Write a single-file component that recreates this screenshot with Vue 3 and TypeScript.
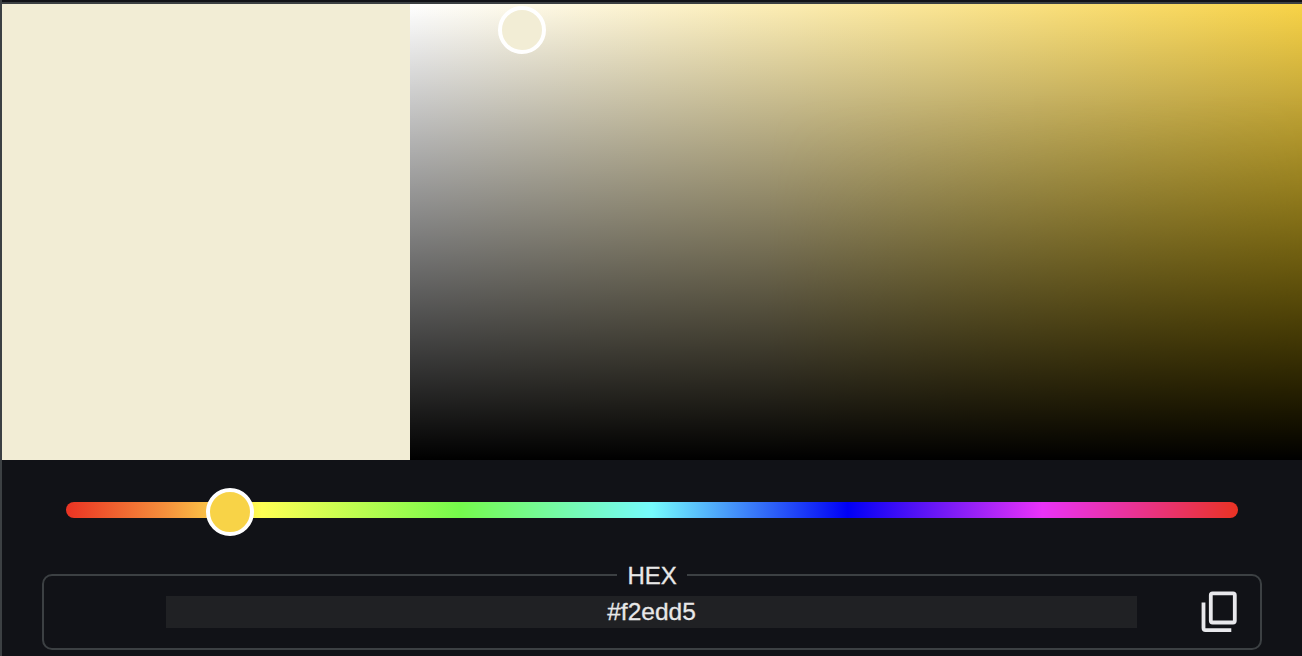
<script setup lang="ts">
import { ref } from 'vue'

const hex = ref<string>('#f2edd5')
</script>

<template>
  <main class="picker">
    <section class="top">
      <div class="preview" :style="{ backgroundColor: hex }"></div>
      <div class="saturation">
        <span class="thumb shade-thumb" :style="{ backgroundColor: hex }"></span>
      </div>
    </section>
    <div class="hue">
      <span class="thumb hue-thumb"></span>
    </div>
    <fieldset class="field">
      <legend>HEX</legend>
      <input v-model="hex" class="value" type="text" spellcheck="false" aria-label="HEX" />
      <button class="copy" type="button" aria-label="Copy">
        <svg width="38" height="44" viewBox="0 0 38 44" fill="none" stroke="#e8e8ec" stroke-width="3.8">
          <rect x="10.8" y="4.3" width="24" height="29.2" rx="1.8" />
          <path d="M3.5 13.5V39.1a2 2 0 0 0 2 2H31.3" />
        </svg>
      </button>
    </fieldset>
  </main>
</template>

<style>
body {
  background: #111217;
}
</style>

<style scoped>
.picker {
  box-sizing: border-box;
  height: 656px;
  overflow: hidden;
  padding-top: 2px;
  border-left: 2px solid #3c4043;
  background: #111217;
  color: #e8e8e8;
  font-family: "Liberation Sans", Arial, sans-serif;
}
.top {
  display: flex;
  height: 456px;
  border-top: 2px solid #3c4043;
}
.preview {
  width: 408px;
}
.saturation {
  position: relative;
  flex: 1;
  background: linear-gradient(to right, #fff, #f8d347);
}
.saturation::before,
.saturation::after {
  content: "";
  position: absolute;
  inset: 0;
}
.saturation::before {
  background: linear-gradient(to right, rgba(248, 208, 0, 0) 40%, #f8d000);
  mask-image: linear-gradient(to bottom, transparent 20%, #000 90%);
}
.saturation::after {
  background: linear-gradient(to top, #000, transparent);
}
.thumb {
  position: absolute;
  z-index: 1;
  box-sizing: border-box;
  width: 48px;
  height: 48px;
  border: 4px solid #fff;
  border-radius: 50%;
}
.shade-thumb {
  left: 88px;
  top: 2px;
}
.hue {
  position: relative;
  height: 16px;
  margin: 42px 64px 0;
  border-radius: 8px;
  background: linear-gradient(to right, #ea3323, #f5903c 8.5%, #ffff54 16.7%, #75fb4c 33.6%, #75fbfd 50%, #0000f5 66.7%, #ea33f7 83.3%, #ea3323);
}
.hue-thumb {
  left: 140px;
  top: -14px;
  background: #f8d347;
}
.field {
  display: flex;
  position: relative;
  box-sizing: border-box;
  height: 88px;
  min-width: 0;
  margin: 44px 40px 0;
  padding: 8px 0 0 122px;
  border: 2px solid #3c4043;
  border-radius: 10px;
}
legend {
  box-sizing: border-box;
  width: 70px;
  height: 26px;
  margin-left: 451px;
  padding: 1px 0 0 10.5px;
  font-size: 24px;
  line-height: 26px;
  -webkit-text-stroke: 0.3px;
}
.value {
  box-sizing: border-box;
  width: 971px;
  height: 32px;
  padding: 0;
  border: 0;
  outline: 0;
  background: #202124;
  color: #e8e8e8;
  font: 24.5px/32px "Liberation Sans", Arial, sans-serif;
  text-align: center;
  -webkit-text-stroke: 0.3px;
}
.copy {
  width: 38px;
  height: 44px;
  margin: -7px 0 0 63px;
  padding: 0;
  border: 0;
  background: none;
}
.copy svg {
  display: block;
}
</style>
